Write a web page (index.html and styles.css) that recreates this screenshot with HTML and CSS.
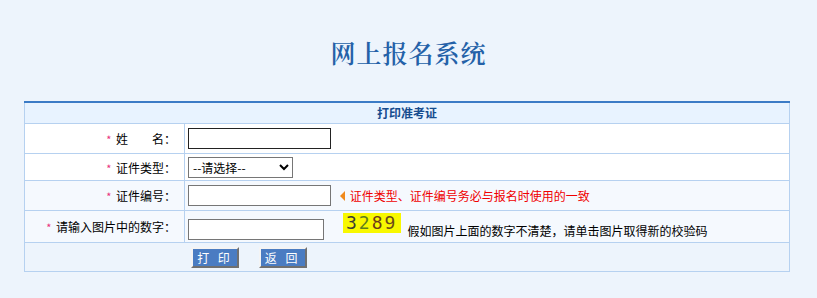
FILE: index.html
```html
<!DOCTYPE html>
<html lang="zh-CN">
<head>
    <meta charset="UTF-8">
    <title>网上报名系统</title>
    <link rel="stylesheet" href="styles.css">
</head>
<body>
    <h1 class="title">网上报名系统</h1>
    <table class="form-table">
        <colgroup>
            <col class="col-label">
            <col>
        </colgroup>
        <tr class="head">
            <th colspan="2">打印准考证</th>
        </tr>
        <tr class="row-a">
            <td class="label"><span class="star">*</span> 姓&emsp;&emsp;名：</td>
            <td class="field"><input type="text" class="txt txt-dark"></td>
        </tr>
        <tr class="row-b">
            <td class="label"><span class="star">*</span> 证件类型：</td>
            <td class="field">
                <select class="sel">
                    <option>--请选择--</option>
                </select>
            </td>
        </tr>
        <tr class="row-c">
            <td class="label"><span class="star">*</span> 证件编号：</td>
            <td class="field">
                <input type="text" class="txt">
                <span class="arrow"></span><span class="warn">证件类型、证件编号务必与报名时使用的一致</span>
            </td>
        </tr>
        <tr class="row-d">
            <td class="label"><span class="star">*</span> 请输入图片中的数字：</td>
            <td class="field">
                <input type="text" class="txt txt-code">
                <span class="captcha"><b class="d1">3</b><b class="d2">2</b><b class="d3">8</b><b class="d4">9</b></span>
                <span class="hint">假如图片上面的数字不清楚，请单击图片取得新的校验码</span>
            </td>
        </tr>
        <tr class="row-e">
            <td colspan="2" class="actions">
                <button class="btn">打&nbsp;印</button>
                <button class="btn">返&nbsp;回</button>
            </td>
        </tr>
    </table>
</body>
</html>
```
FILE: styles.css
```css
body {
    margin: 0;
    background-color: #edf4fc;
    font-family: "Noto Sans CJK SC", "DejaVu Sans", sans-serif;
    font-size: 12px;
    color: #000;
}
.title {
    margin: 0;
    padding-top: 36px;
    height: 101px;
    box-sizing: border-box;
    text-align: center;
    font-family: "Noto Serif CJK SC", "Noto Sans CJK SC", serif;
    font-size: 25px;
    line-height: 32px;
    font-weight: 600;
    letter-spacing: 1px;
    color: #2461a8;
}
.form-table {
    width: 766px;
    margin-left: 24px;
    border-collapse: collapse;
    table-layout: fixed;
    border-top: 2px solid #3b7bc6;
}
.col-label {
    width: 160px;
}
.form-table td, .form-table th {
    border: 1px solid #b6d1f0;
    padding: 0;
}
.head th {
    height: 20px;
    background: #e8f3ff;
    color: #164c8e;
    font-weight: bold;
    font-size: 12px;
    line-height: 16px;
}
.label {
    text-align: right;
    padding-right: 8px !important;
    white-space: nowrap;
}
.field {
    padding-left: 3px !important;
    white-space: nowrap;
}
.row-a { height: 30px; background: #fff; }
.row-b { height: 27px; background: #fff; }
.row-c { height: 30px; background: #f5f9fe; }
.row-d { height: 32px; background: #f5f9fe; }
.row-e { height: 29px; background: #edf4fc; }
.star {
    color: #e8307a;
    font-size: 11px;
    margin-right: 2px;
}
.txt {
    width: 143px;
    height: 21px;
    box-sizing: border-box;
    border: 1px solid #767676;
    background: #fff;
    padding: 0 2px;
    margin: 0;
    vertical-align: middle;
    font-size: 12px;
}
.txt-dark {
    border-color: #222;
}
.txt-code {
    width: 136px;
}
.sel {
    width: 105px;
    height: 21px;
    box-sizing: border-box;
    border: 1px solid #767676;
    background: #fff;
    font-family: "Noto Sans CJK SC", sans-serif;
    font-size: 12px;
    margin: 0;
    vertical-align: middle;
}
.arrow {
    display: inline-block;
    width: 0;
    height: 0;
    margin-left: 6px;
    border-top: 5px solid transparent;
    border-bottom: 5px solid transparent;
    border-right: 5px solid #f08a1c;
    vertical-align: middle;
}
.warn {
    color: #f00000;
    margin-left: 5px;
    vertical-align: middle;
}
.captcha {
    display: inline-block;
    width: 58px;
    height: 20px;
    margin-left: 16px;
    background: #f8f800;
    text-align: center;
    font-family: "DejaVu Sans Mono", monospace;
    font-size: 18px;
    line-height: 20px;
    letter-spacing: 2px;
    vertical-align: 3px;
}
.captcha b { font-weight: normal; }
.d1 { color: #3c3c34; }
.d2 { color: #5e7e1c; }
.d3 { color: #6e3a18; }
.d4 { color: #6a4a1a; }
.hint {
    margin-left: 4px;
    vertical-align: -4px;
}
.actions {
    padding-left: 166px !important;
}
.btn {
    width: 48px;
    height: 21px;
    margin: 0;
    padding: 0;
    background: #4a7cc2;
    color: #fff;
    font-family: "Noto Sans CJK SC", sans-serif;
    font-size: 12px;
    letter-spacing: 3px;
    border: 2px solid;
    border-color: #f4f4f4 #707070 #707070 #f4f4f4;
    vertical-align: middle;
}
.btn + .btn {
    margin-left: 17px;
}
```
